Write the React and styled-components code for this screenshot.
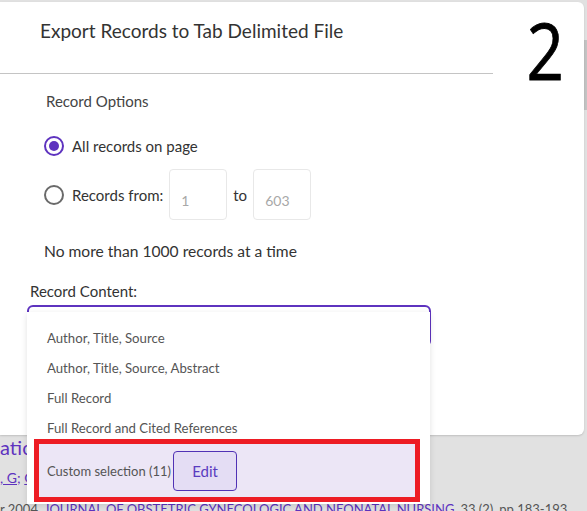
import React from "react";
import styled, {createGlobalStyle} from "styled-components";

// Style
const GlobalStyle = createGlobalStyle`
  html, body {
    margin: 0;
    padding: 0;
  }
  body {
    width: 587px;
    height: 511px;
    overflow: hidden;
    background: #e1e1e1;
    font-family: "Source Sans Pro", Lato, "Noto Sans", sans-serif;
  }
`;

const Page = styled.div`
  position: relative;
  width: 587px;
  height: 511px;
  overflow: hidden;
  background: #e1e1e1;
`;

const Behind = styled.div`
  display: flex;
  flex-direction: column;
  padding-top: 434px;
  white-space: nowrap;
`;

const BehindTitle = styled.div`
  font-size: 20px;
  line-height: 26px;
  color: #5e33bf;
`;

const BehindAuthors = styled.div`
  margin-top: 8px;
  font-size: 14px;
  line-height: 20px;
  color: #5e33bf;
  a {
    color: inherit;
    text-decoration: underline;
  }
`;

const BehindJournal = styled.div`
  margin-top: 12px;
  display: flex;
  gap: 6px;
  font-size: 13px;
  line-height: 18px;
  color: #555;
`;

const JournalLink = styled.span`
  color: #5e33bf;
  text-decoration: underline;
`;

const Scrollbar = styled.div`
  position: absolute;
  right: 0;
  top: 40px;
  width: 3px;
  height: 70px;
  background: #c3c3c3;
`;

const Modal = styled.div`
  position: absolute;
  left: 0;
  top: 2px;
  width: 584px;
  height: 433px;
  background: #fff;
  border-radius: 0 6px 6px 0;
  box-shadow: 0 1px 2px rgba(0, 0, 0, 0.15);
`;

const Header = styled.div`
  width: 493px;
  height: 72px;
  box-sizing: border-box;
  padding: 17px 0 0 40px;
  border-bottom: 1px solid #c4c4c4;
`;

const Title = styled.h2`
  margin: 0;
  font-size: 19px;
  font-weight: 400;
  line-height: 24px;
  color: #333;
`;

const StepMark = styled.div`
  position: absolute;
  right: 16px;
  top: 0;
  padding: 4px 0;
  font-family: "Open Sans", "Noto Sans", sans-serif;
  font-size: 78px;
  line-height: 88px;
  color: #000;
  -webkit-text-stroke: 0.8px #000;
  transform: scaleX(0.84);
`;

const Body = styled.div`
  display: flex;
  flex-direction: column;
  padding-left: 44px;
`;

const SectionLabel = styled.div`
  margin: 17px 0 0 2px;
  font-size: 15px;
  line-height: 20px;
  color: #444;
`;

const RadioRow = styled.label`
  display: flex;
  align-items: center;
  gap: 6px;
  margin-top: ${p => p.$gap}px;
  font-size: 15px;
  color: #333;
`;

const Radio = styled.span`
  width: 20px;
  height: 20px;
  margin-right: 2px;
  box-sizing: border-box;
  border-radius: 50%;
  border: 2px solid ${p => (p.$checked ? "#5e33bf" : "#6a6a6a")};
  display: flex;
  align-items: center;
  justify-content: center;
  &::after {
    content: "";
    width: 10px;
    height: 10px;
    border-radius: 50%;
    background: ${p => (p.$checked ? "#5e33bf" : "transparent")};
  }
`;

const NumberBox = styled.div`
  width: 58px;
  height: 51px;
  box-sizing: border-box;
  border: 1px solid #e8e8e8;
  border-radius: 4px;
  display: flex;
  align-items: flex-end;
  padding: 0 0 10px 11px;
  font-size: 14px;
  color: #a8a8a8;
`;

const Note = styled.div`
  margin-top: 21px;
  font-size: 15.6px;
  line-height: 20px;
  color: #333;
`;

const ContentLabel = styled.div`
  margin: 20px 0 0 -14px;
  font-size: 15px;
  line-height: 20px;
  color: #333;
`;

const Select = styled.div`
  margin: 4px 0 0 -17px;
  width: 404px;
  height: 42px;
  box-sizing: border-box;
  border: 2px solid #5e33bf;
  border-radius: 6px;
`;

const Menu = styled.ul`
  position: absolute;
  left: 27px;
  top: 312px;
  width: 403px;
  margin: 0;
  padding: 11px 0 2px;
  box-sizing: border-box;
  list-style: none;
  background: #fff;
  box-shadow: 0 2px 6px rgba(0, 0, 0, 0.12);
  display: flex;
  flex-direction: column;
`;

const Option = styled.li`
  flex: none;
  height: 30px;
  display: flex;
  align-items: center;
  padding-left: 20px;
  font-size: 13.2px;
  color: #555;
`;

const CustomOption = styled.li`
  flex: none;
  margin: -4px 10px 0 7px;
  height: 63px;
  box-sizing: border-box;
  border: 5px solid #ed1c24;
  background: #ece6f6;
  display: flex;
  align-items: center;
  gap: 2px;
  padding-left: 8px;
  font-size: 13px;
  color: #555;
`;

const EditButton = styled.button`
  width: 64px;
  height: 40px;
  border: 1px solid #5032b5;
  border-radius: 4px;
  background: #e4ddf4;
  color: #5a3cc0;
  font-family: inherit;
  font-size: 15px;
  padding: 0;
`;

export default function App() {
  return (
    <>
      <GlobalStyle />
      <Page>
        <Behind>
          <BehindTitle>ation of a Breastfeeding Support Program</BehindTitle>
          <BehindAuthors>
            <a>, G</a>; <a>O</a>
          </BehindAuthors>
          <BehindJournal>
            <span>r 2004</span>
            <JournalLink>
              JOURNAL OF OBSTETRIC GYNECOLOGIC AND NEONATAL NURSING
            </JournalLink>
            <span>33 (2)</span>
            <span>pp 183-193</span>
          </BehindJournal>
        </Behind>
        <Scrollbar />

        <Modal>
          <Header>
            <Title>Export Records to Tab Delimited File</Title>
          </Header>
          <StepMark>2</StepMark>
          <Body>
            <SectionLabel>Record Options</SectionLabel>
            <RadioRow $gap={25}>
              <Radio $checked />
              All records on page
            </RadioRow>
            <RadioRow $gap={13}>
              <Radio />
              Records from:
              <NumberBox>1</NumberBox>
              <span>to</span>
              <NumberBox>603</NumberBox>
            </RadioRow>
            <Note>No more than 1000 records at a time</Note>
            <ContentLabel>Record Content:</ContentLabel>
            <Select />
          </Body>
        </Modal>

        <Menu>
          <Option>Author, Title, Source</Option>
          <Option>Author, Title, Source, Abstract</Option>
          <Option>Full Record</Option>
          <Option>Full Record and Cited References</Option>
          <CustomOption>
            Custom selection (11)
            <EditButton>Edit</EditButton>
          </CustomOption>
        </Menu>
      </Page>
    </>
  );
}
